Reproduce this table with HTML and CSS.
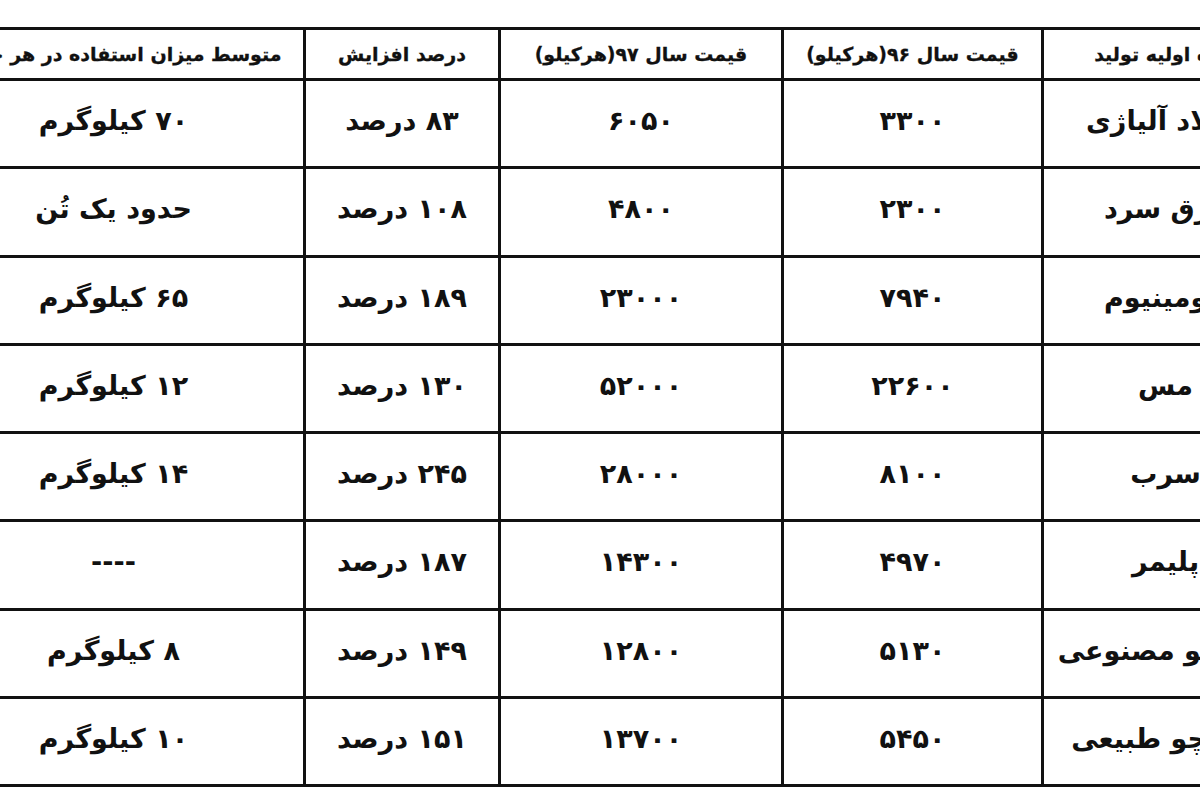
FILE: index.html
```html
<!DOCTYPE html>
<html lang="fa">
<head>
<meta charset="utf-8">
<title>قیمت مواد اولیه</title>
<link rel="stylesheet" href="styles.css">
</head>
<body>
<div class="sheet">
<table class="prices" dir="rtl">
<colgroup>
<col class="c-material">
<col class="c-p96">
<col class="c-p97">
<col class="c-rise">
<col class="c-usage">
</colgroup>
<thead>
<tr>
<th>ماده اولیه تولید</th>
<th>قیمت سال ۹۶(هرکیلو)</th>
<th>قیمت سال ۹۷(هرکیلو)</th>
<th>درصد افزایش</th>
<th>متوسط میزان استفاده در هر خودرو</th>
</tr>
</thead>
<tbody>
<tr><td>فولاد آلیاژی</td><td>۳۳۰۰</td><td>۶۰۵۰</td><td>۸۳ درصد</td><td>۷۰ کیلوگرم</td></tr>
<tr><td>ورق سرد</td><td>۲۳۰۰</td><td>۴۸۰۰</td><td>۱۰۸ درصد</td><td>حدود یک تُن</td></tr>
<tr><td>آلومینیوم</td><td>۷۹۴۰</td><td>۲۳۰۰۰</td><td>۱۸۹ درصد</td><td>۶۵ کیلوگرم</td></tr>
<tr><td>مس</td><td>۲۲۶۰۰</td><td>۵۲۰۰۰</td><td>۱۳۰ درصد</td><td>۱۲ کیلوگرم</td></tr>
<tr><td>سرب</td><td>۸۱۰۰</td><td>۲۸۰۰۰</td><td>۲۴۵ درصد</td><td>۱۴ کیلوگرم</td></tr>
<tr><td>پلیمر</td><td>۴۹۷۰</td><td>۱۴۳۰۰</td><td>۱۸۷ درصد</td><td>----</td></tr>
<tr><td>کائوچو مصنوعی</td><td>۵۱۳۰</td><td>۱۲۸۰۰</td><td>۱۴۹ درصد</td><td>۸ کیلوگرم</td></tr>
<tr><td>کائوچو طبیعی</td><td>۵۴۵۰</td><td>۱۳۷۰۰</td><td>۱۵۱ درصد</td><td>۱۰ کیلوگرم</td></tr>
</tbody>
</table>
</div>
</body>
</html>
```
FILE: styles.css
```css
html, body {
  margin: 0;
  padding: 0;
  background: #fff;
  overflow: hidden;
  width: 1200px;
  height: 800px;
}
.sheet {
  width: 1366px;
  margin-left: -79px;
  padding-top: 27px;
}
.prices {
  width: 1366px;
  border-collapse: collapse;
  table-layout: fixed;
  font-family: "DejaVu Sans", sans-serif;
  color: #111;
}
.c-material { width: 246px; }
.c-p96 { width: 260px; }
.c-p97 { width: 283px; }
.c-rise { width: 195px; }
.c-usage { width: 382px; }
.prices th,
.prices td {
  border: 3px solid #111;
  text-align: center;
  padding: 0;
  white-space: nowrap;
}
.prices th {
  height: 48px;
  font-size: 19px;
  font-weight: bold;
  -webkit-text-stroke: 0.3px #111;
}
.prices td {
  height: 79.25px;
  font-size: 27px;
  font-weight: bold;
  padding-bottom: 6px;
}
```
